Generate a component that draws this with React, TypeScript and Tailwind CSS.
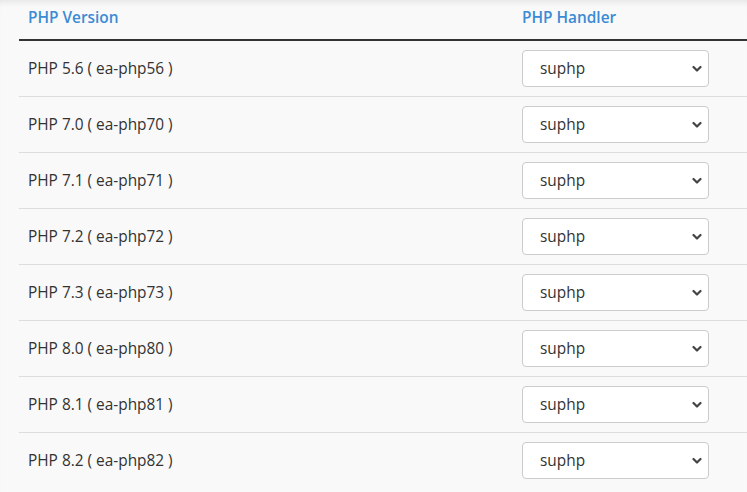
import React from "react";

const rows = [
  ["5.6", "56"],
  ["7.0", "70"],
  ["7.1", "71"],
  ["7.2", "72"],
  ["7.3", "73"],
  ["8.0", "80"],
  ["8.1", "81"],
  ["8.2", "82"],
];

function Select() {
  return (
    <div className="flex h-[37px] w-[187px] items-center justify-between rounded-[4px] border border-[#cccccc] bg-white pl-[17px] pr-[6px] text-[15.4px] text-[#333]">
      <span>suphp</span>
      <svg width="10" height="8" viewBox="0 0 10 8">
        <path d="M1.5 2 L5 5.5 L8.5 2" fill="none" stroke="#444" strokeWidth="2.2" strokeLinecap="round" strokeLinejoin="round" />
      </svg>
    </div>
  );
}

export default function App() {
  return (
    <div
      className="h-[492px] w-[747px] overflow-hidden bg-[#f9f9f9] pl-[19px] shadow-[inset_0_6px_6px_-4px_rgba(0,0,0,0.09)]"
      style={{ fontFamily: "'Open Sans', sans-serif" }}
    >
      <div className="w-[760px]">
        <div className="flex h-[41px] items-center border-b-2 border-[#333] pb-[4px] text-[15.4px] font-semibold text-[#3b8bd5]">
          <div className="w-[494px] pl-[9px]">PHP Version</div>
          <div className="pl-[9px]">PHP Handler</div>
        </div>
        {rows.map(([v, n], i) => (
          <div
            key={v}
            className={`flex items-center text-[15.4px] text-[#333] ${i < rows.length - 1 ? "h-[56px] border-b border-[#dddddd]" : "h-[55px]"}`}
          >
            <div className="w-[494px] pl-[9px]">PHP {v} ( ea-php{n} )</div>
            <div className="pl-[9px]">
              <Select />
            </div>
          </div>
        ))}
      </div>
    </div>
  );
}
